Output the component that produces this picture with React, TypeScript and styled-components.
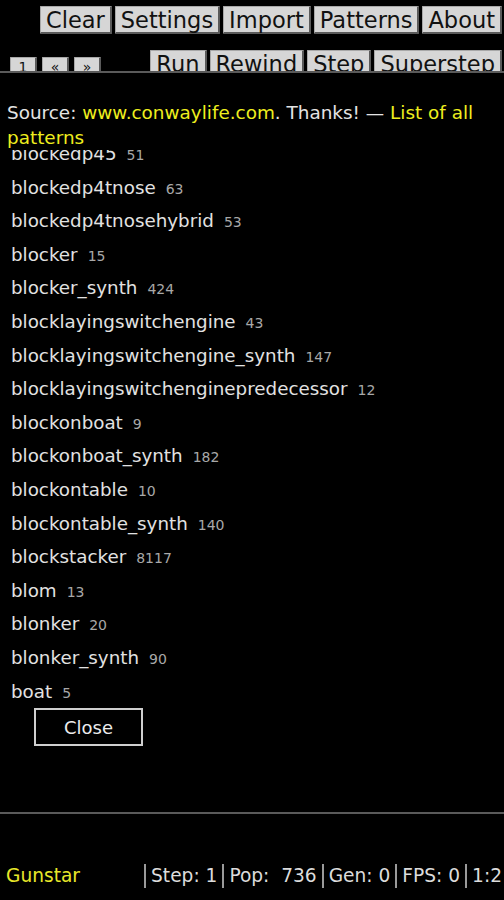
import React, { useLayoutEffect, useRef } from "react";
import styled, { createGlobalStyle } from "styled-components";

const Global = createGlobalStyle`
  html, body {
    margin: 0;
    padding: 0;
    background: #000;
    font-family: "DejaVu Sans", "Liberation Sans", sans-serif;
    overflow: hidden;
  }
  * { box-sizing: border-box; }
`;

const Page = styled.div`
  position: relative;
  width: 504px;
  height: 900px;
  display: flex;
  flex-direction: column;
  background: #000;
`;

const Header = styled.header`
  display: flex;
  flex-direction: column;
  gap: 16px;
  padding: 6px 2px 0 10px;
`;

const Row = styled.div<{ $split?: boolean }>`
  display: flex;
  justify-content: ${(p) => (p.$split ? "space-between" : "flex-end")};
  align-items: flex-end;
`;

const Group = styled.div<{ $gap: number }>`
  display: flex;
  align-items: flex-end;
  gap: ${(p) => p.$gap}px;
`;

const ToolButton = styled.button<{ $small?: boolean }>`
  font-family: "DejaVu Sans", sans-serif;
  font-size: ${(p) => (p.$small ? "14px" : "22.5px")};
  line-height: ${(p) => (p.$small ? "19px" : "26px")};
  height: ${(p) => (p.$small ? "21px" : "28px")};
  min-width: ${(p) => (p.$small ? "27px" : "0")};
  padding: 0 5px;
  margin: 0;
  color: #111;
  background: #d6d6d6;
  border: 1px solid #a8a8a8;
  border-right: 2px solid #5a5a5a;
  border-bottom: 2px solid #5a5a5a;
  border-radius: 1px;
  cursor: pointer;
`;

const Canvas = styled.main`
  flex: 1;
  background: #000;
`;

const StatusBar = styled.footer`
  display: flex;
  justify-content: space-between;
  align-items: center;
  height: 48px;
  padding: 0 2px 0 6px;
  font-size: 18.6px;
  line-height: 24px;
`;

const PatternName = styled.span`
  color: #e8e82a;
`;

const Stats = styled.div`
  display: flex;
  color: #dcdcdc;
  white-space: pre;
`;

const Stat = styled.span`
  border-left: 2px solid #9a9a9a;
  padding: 0 5px 0 5px;
  &:last-child { padding-right: 0; }
`;

const Panel = styled.section`
  position: absolute;
  left: 0;
  right: 0;
  top: 71px;
  height: 743px;
  background: #000;
  border-top: 2px solid #5a5a5a;
  border-bottom: 2px solid #5a5a5a;
  padding: 27px 7px 0 7px;
  display: flex;
  flex-direction: column;
`;

const Source = styled.p`
  margin: 0;
  font-size: 18.4px;
  line-height: 25px;
  color: #e4e4e4;
`;

const Link = styled.a`
  color: #eeee1e;
  text-decoration: none;
`;

const List = styled.ul`
  list-style: none;
  margin: 0;
  padding: 0;
  height: 558px;
  overflow: hidden;
`;

const Item = styled.li`
  height: 33.6px;
  line-height: 33.6px;
  padding-left: 4px;
  white-space: nowrap;
`;

const Name = styled.span`
  font-size: 18.3px;
  color: #e2e2e2;
`;

const Count = styled.span`
  font-size: 14px;
  color: #a8a8a8;
  margin-left: 10px;
`;

const CloseButton = styled.button`
  align-self: flex-start;
  margin: 0 0 0 27px;
  width: 109px;
  height: 38px;
  background: #000;
  color: #ececec;
  border: 2px solid #cfcfcf;
  font-family: "DejaVu Sans", sans-serif;
  font-size: 18px;
  cursor: pointer;
`;

const patterns: [string, number][] = [
  ["blockedp45", 51],
  ["blockedp4tnose", 63],
  ["blockedp4tnosehybrid", 53],
  ["blocker", 15],
  ["blocker_synth", 424],
  ["blocklayingswitchengine", 43],
  ["blocklayingswitchengine_synth", 147],
  ["blocklayingswitchenginepredecessor", 12],
  ["blockonboat", 9],
  ["blockonboat_synth", 182],
  ["blockontable", 10],
  ["blockontable_synth", 140],
  ["blockstacker", 8117],
  ["blom", 13],
  ["blonker", 20],
  ["blonker_synth", 90],
  ["boat", 5],
  ["boatbit", 12],
  ["boatmaker", 4],
];

export default function App() {
  const listRef = useRef<HTMLUListElement>(null);
  useLayoutEffect(() => {
    if (listRef.current) listRef.current.scrollTop = 13;
  }, []);

  return (
    <Page>
      <Global />
      <Header>
        <Row>
          <Group $gap={3}>
            {["Clear", "Settings", "Import", "Patterns", "About"].map((b) => (
              <ToolButton key={b}>{b}</ToolButton>
            ))}
          </Group>
        </Row>
        <Row $split>
          <Group $gap={5}>
            {["1", "«", "»"].map((b) => (
              <ToolButton key={b} $small>
                {b}
              </ToolButton>
            ))}
          </Group>
          <Group $gap={3}>
            {["Run", "Rewind", "Step", "Superstep"].map((b) => (
              <ToolButton key={b}>{b}</ToolButton>
            ))}
          </Group>
        </Row>
      </Header>
      <Canvas />
      <StatusBar>
        <PatternName>Gunstar</PatternName>
        <Stats>
          <Stat>Step: 1</Stat>
          <Stat>Pop:  736</Stat>
          <Stat>Gen: 0</Stat>
          <Stat>FPS: 0</Stat>
          <Stat>1:2</Stat>
        </Stats>
      </StatusBar>
      <Panel>
        <Source>
          Source: <Link href="#">www.conwaylife.com</Link>. Thanks! —{" "}
          <Link href="#">List of all patterns</Link>
        </Source>
        <List ref={listRef}>
          {patterns.map(([n, c]) => (
            <Item key={n}>
              <Name>{n}</Name>
              <Count>{c}</Count>
            </Item>
          ))}
        </List>
        <CloseButton>Close</CloseButton>
      </Panel>
    </Page>
  );
}
